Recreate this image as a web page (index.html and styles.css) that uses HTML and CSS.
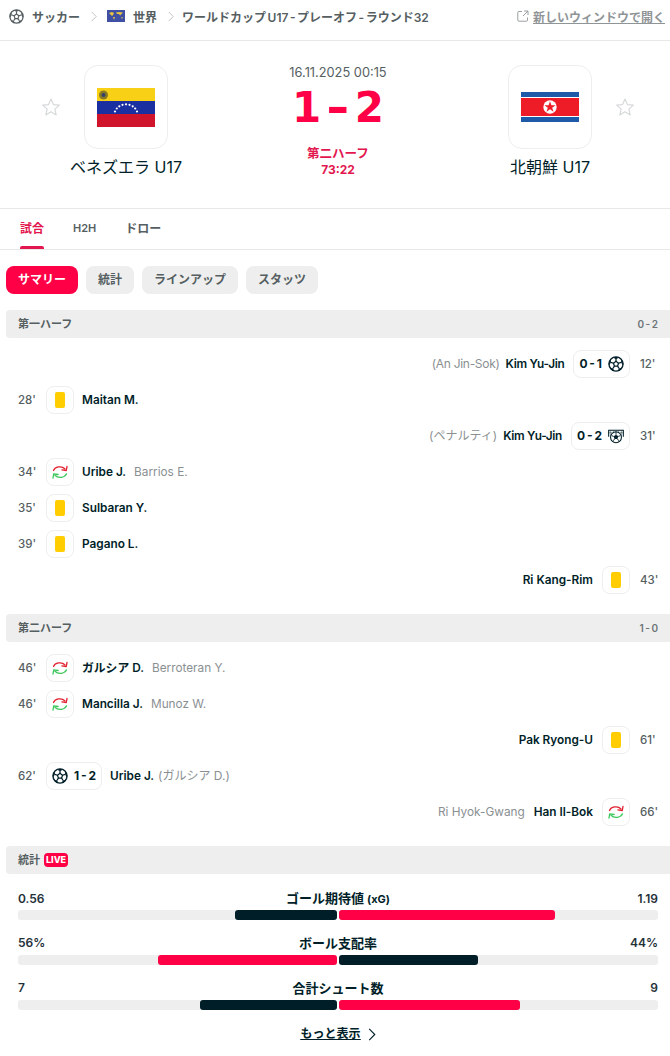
FILE: index.html
```html
<!DOCTYPE html>
<html lang="ja">
<head>
  <meta charset="UTF-8" />
  <meta name="viewport" content="width=device-width, initial-scale=1.0">
  <title>ベネズエラ U17 - 北朝鮮 U17</title>
  <link rel="stylesheet" href="styles.css">
</head>
<body>

  <!-- Shared icons -->
  <svg class="defs" width="0" height="0">
    <symbol id="ball" viewBox="0 0 24 24">
      <circle cx="12" cy="12" r="10.6" fill="none" stroke="currentColor" stroke-width="2"/>
      <path d="M12 8l3.800 2.800-1.500 4.500H9.700l-1.500-4.500z" fill="none" stroke="currentColor" stroke-width="1.800" stroke-linejoin="round"/>
      <path d="M12 8V4.500M15.800 10.800l3.700-1.300M14.300 15.300l2.300 3.200M9.700 15.300l-2.300 3.200M8.200 10.800L4.500 9.500" fill="none" stroke="currentColor" stroke-width="1.800"/>
      <path d="M8 2.500L12 4.800l4-2.300L12 1zM19.500 9.500l.6-4.500 2.900 6.500-1 2.500zM16.600 18.500l4.700-.5-4.300 4.600-2.400-.3zM7.400 18.500l-4.700-.5L7 22.600l2.400-.3zM4.500 9.500L3.900 5 1 11.500l1 2.500z" fill="currentColor"/>
    </symbol>
    <symbol id="penalty" viewBox="0 0 24 24">
      <path d="M1 13V3.500h22V13" fill="none" stroke="currentColor" stroke-width="1.600"/>
      <path d="M4 3.500v8M8 3.500v3M12 3.500v3M16 3.500v3M20 3.500v8M1 7h5M18 7h5" stroke="currentColor" stroke-width=".6"/>
      <circle cx="12" cy="14" r="8.200" fill="#fff" stroke="currentColor" stroke-width="1.600"/>
      <path d="M12 10l3.500 2.500-1.300 4h-4.400l-1.300-4z" fill="currentColor"/>
      <path d="M12 10V6.500M15.500 12.500l3.200-1M14.200 16.500l2 2.700M9.800 16.500l-2 2.700M8.500 12.500l-3.200-1" stroke="currentColor" stroke-width="1.400"/>
    </symbol>
    <symbol id="star" viewBox="0 0 24 24">
      <path d="M12 2.500l2.900 6.600 7.100.7-5.400 4.700 1.600 7-6.200-3.700-6.200 3.700 1.600-7L2 9.800l7.100-.7z" fill="none" stroke="currentColor" stroke-width="1.400" stroke-linejoin="round"/>
    </symbol>
    <symbol id="sub" viewBox="0 0 16 16">
      <path d="M1.500 6.500C3 2.800 9.500 1.200 13 5" fill="none" stroke="#e3202f" stroke-width="1.300" stroke-linecap="round"/>
      <path d="M15 2.300L14.300 6.500l-4.400-.7" fill="none" stroke="#e3202f" stroke-width="1.300" stroke-linecap="round" stroke-linejoin="round"/>
      <path d="M14.500 9.800C13 13.400 6.500 15 3 11.200" fill="none" stroke="#3cc75a" stroke-width="1.300" stroke-linecap="round"/>
      <path d="M1 14l.7-4.200 4.400.7" fill="none" stroke="#3cc75a" stroke-width="1.300" stroke-linecap="round" stroke-linejoin="round"/>
    </symbol>
    <symbol id="chevron" viewBox="0 0 8 14">
      <path d="M1 1l6 6-6 6" fill="none" stroke="currentColor" stroke-width="1.200"/>
    </symbol>
  </svg>

  <!-- Breadcrumb -->
  <div class="crumbs">
    <svg class="crumb-ball"><use href="#ball"/></svg>
    <span>サッカー</span>
    <svg class="crumb-sep"><use href="#chevron"/></svg>
    <svg class="crumb-flag" viewBox="0 0 18 12">
      <rect width="18" height="12" fill="#3f4fa3"/>
      <path d="M2 3l3-1 2 1-1 2-1 1-2-2zM6 7l2 0-1 3zM9 2.500l3-.5 4 .5-2 2-1 1-1-1.500-2 0zM14 7l2 .5-1 1.500z" fill="#e9c53f"/>
    </svg>
    <span>世界</span>
    <svg class="crumb-sep"><use href="#chevron"/></svg>
    <span class="crumb-last">ワールドカップ U17 - プレーオフ - ラウンド32</span>
    <a class="new-window" href="#">
      <svg class="ext-icon" viewBox="0 0 12 12">
        <path d="M5 1.500H1.800a1 1 0 0 0-1 1v7.700a1 1 0 0 0 1 1h7.700a1 1 0 0 0 1-1V7.500M7 1h4v4M11 1L6 6" fill="none" stroke="currentColor" stroke-width=".9"/>
      </svg>
      <span class="new-window-text">新しいウィンドウで開く</span>
    </a>
  </div>

  <!-- Match header -->
  <div class="match-head">
    <div class="team">
      <svg class="star star-left"><use href="#star"/></svg>
      <div class="logo">
        <svg class="flag-ve" viewBox="0 0 58 39">
          <rect width="58" height="13" fill="#f8d117"/>
          <rect y="13" width="58" height="13" fill="#1a2fa0"/>
          <rect y="26" width="58" height="13" fill="#cf142b"/>
          <circle cx="6.500" cy="7" r="4.500" fill="#8a7a22"/>
          <circle cx="6.500" cy="7" r="2" fill="#33406e"/>
          <g fill="#fff">
            <circle cx="18" cy="23.500" r="1.100"/><circle cx="19.800" cy="20.500" r="1.100"/><circle cx="22.300" cy="18.300" r="1.100"/>
            <circle cx="25.500" cy="16.800" r="1.100"/><circle cx="29" cy="16.300" r="1.100"/><circle cx="32.500" cy="16.800" r="1.100"/>
            <circle cx="35.700" cy="18.300" r="1.100"/><circle cx="38.200" cy="20.500" r="1.100"/><circle cx="40" cy="23.500" r="1.100"/>
          </g>
        </svg>
      </div>
      <div class="team-name">ベネズエラ U17</div>
    </div>

    <div class="score-col">
      <div class="kickoff">16.11.2025 00:15</div>
      <div class="score">1<span class="score-dash">-</span>2</div>
      <div class="period">第二ハーフ</div>
      <div class="clock">73:22</div>
    </div>

    <div class="team">
      <div class="spacer"></div>
      <div class="logo">
        <svg class="flag-kp" viewBox="0 0 58 30">
          <rect width="58" height="30" fill="#1f5aa8"/>
          <rect y="5" width="58" height="20" fill="#fff"/>
          <rect y="6" width="58" height="18" fill="#ed1c27"/>
          <circle cx="29" cy="15" r="6.700" fill="#fff"/>
          <path d="M29 9.300l1.400 4h4.200l-3.400 2.500 1.300 4-3.500-2.500-3.500 2.500 1.300-4-3.400-2.500h4.200z" fill="#ed1c27"/>
        </svg>
      </div>
      <svg class="star star-right"><use href="#star"/></svg>
      <div class="team-name">北朝鮮 U17</div>
    </div>
  </div>

  <!-- Tabs -->
  <div class="tabs">
    <div class="tab active">試合</div>
    <div class="tab tab-latin">H2H</div>
    <div class="tab">ドロー</div>
  </div>

  <div class="pills">
    <div class="pill active">サマリー</div>
    <div class="pill">統計</div>
    <div class="pill">ラインアップ</div>
    <div class="pill">スタッツ</div>
  </div>

  <div class="content">

    <!-- First half -->
    <div class="section-bar"><span>第一ハーフ</span><span class="half-score">0 - 2</span></div>
    <div class="events">
      <div class="event away">
        <span class="assist tight">(An Jin-Sok)</span>
        <span class="player tight">Kim Yu-Jin</span>
        <div class="box goal"><b>0 - 1</b><svg class="ball"><use href="#ball"/></svg></div>
        <span class="minute">12'</span>
      </div>
      <div class="event">
        <span class="minute">28'</span>
        <div class="box"><i class="card"></i></div>
        <span class="player">Maitan M.</span>
      </div>
      <div class="event away">
        <span class="assist">(ペナルティ)</span>
        <span class="player tight">Kim Yu-Jin</span>
        <div class="box goal"><b>0 - 2</b><svg class="ball"><use href="#penalty"/></svg></div>
        <span class="minute">31'</span>
      </div>
      <div class="event">
        <span class="minute">34'</span>
        <div class="box"><svg class="sub"><use href="#sub"/></svg></div>
        <span class="player">Uribe J.</span>
        <span class="off">Barrios E.</span>
      </div>
      <div class="event">
        <span class="minute">35'</span>
        <div class="box"><i class="card"></i></div>
        <span class="player">Sulbaran Y.</span>
      </div>
      <div class="event">
        <span class="minute">39'</span>
        <div class="box"><i class="card"></i></div>
        <span class="player">Pagano L.</span>
      </div>
      <div class="event away">
        <span class="player">Ri Kang-Rim</span>
        <div class="box"><i class="card"></i></div>
        <span class="minute">43'</span>
      </div>
    </div>

    <!-- Second half -->
    <div class="section-bar"><span>第二ハーフ</span><span class="half-score">1 - 0</span></div>
    <div class="events">
      <div class="event">
        <span class="minute">46'</span>
        <div class="box"><svg class="sub"><use href="#sub"/></svg></div>
        <span class="player">ガルシア D.</span>
        <span class="off">Berroteran Y.</span>
      </div>
      <div class="event">
        <span class="minute">46'</span>
        <div class="box"><svg class="sub"><use href="#sub"/></svg></div>
        <span class="player">Mancilla J.</span>
        <span class="off">Munoz W.</span>
      </div>
      <div class="event away">
        <span class="player">Pak Ryong-U</span>
        <div class="box"><i class="card"></i></div>
        <span class="minute">61'</span>
      </div>
      <div class="event">
        <span class="minute">62'</span>
        <div class="box goal"><svg class="ball"><use href="#ball"/></svg><b>1 - 2</b></div>
        <span class="player">Uribe J.</span>
        <span class="assist">(ガルシア D.)</span>
      </div>
      <div class="event away">
        <span class="off">Ri Hyok-Gwang</span>
        <span class="player">Han Il-Bok</span>
        <div class="box"><svg class="sub"><use href="#sub"/></svg></div>
        <span class="minute">66'</span>
      </div>
    </div>

    <!-- Stats -->
    <div class="section-bar"><span class="stats-title">統計 <em class="live">LIVE</em></span></div>
    <div class="stats">
      <div class="stat">
        <div class="stat-head"><span>0.56</span><strong>ゴール期待値 <small>(xG)</small></strong><span class="val-right">1.19</span></div>
        <div class="bars">
          <div class="bar home"><div class="fill dark" style="width:32%"></div></div>
          <div class="bar"><div class="fill red" style="width:67.7%"></div></div>
        </div>
      </div>
      <div class="stat">
        <div class="stat-head"><span>56%</span><strong>ボール支配率</strong><span class="val-right">44%</span></div>
        <div class="bars">
          <div class="bar home"><div class="fill red" style="width:56%"></div></div>
          <div class="bar"><div class="fill dark" style="width:43.600%"></div></div>
        </div>
      </div>
      <div class="stat">
        <div class="stat-head"><span>7</span><strong>合計シュート数</strong><span class="val-right">9</span></div>
        <div class="bars">
          <div class="bar home"><div class="fill dark" style="width:43%"></div></div>
          <div class="bar"><div class="fill red" style="width:56.700%"></div></div>
        </div>
      </div>
      <a class="more" href="#"><span>もっと表示</span><svg class="more-arrow"><use href="#chevron"/></svg></a>
    </div>

  </div>
</body>
</html>
```

FILE: styles.css
```css
html, body {
  margin: 0;
  height: 100%;
  overflow: hidden;
  background: #fff;
  font-family: Inter, "Noto Sans CJK JP", sans-serif;
  color: #001e28;
}

a {
  color: inherit;
}

.defs {
  display: block;
  height: 0;
}

/* BREADCRUMB */
.crumbs {
  height: 32px;
  border-bottom: 1px solid #e8e8e8;
  padding: 0 5px 8px 9px;
  display: flex;
  align-items: center;
  font-size: 12px;
  font-weight: 600;
  color: #555e61;
}

.crumb-ball {
  width: 15px;
  height: 15px;
  margin-right: 8px;
}

.crumb-sep {
  width: 6px;
  height: 11px;
  margin: 0 10px 0 11px;
  color: #b9bdbf;
}

.crumb-flag {
  width: 18px;
  height: 12px;
  margin-right: 8px;
}

.crumb-last {
  word-spacing: -1.500px;
  margin-left: -2px;
}

.new-window {
  margin-left: auto;
  display: flex;
  align-items: center;
  gap: 4px;
  color: #8f9496;
}

.ext-icon {
  width: 12px;
  height: 12px;
}

.new-window-text {
  text-decoration: underline;
}

/* MATCH HEADER */
.match-head {
  display: grid;
  grid-template-columns: 240px 1fr 240px;
  padding: 24px 0 30px 6px;
  border-bottom: 1px solid #e8e8e8;
}

.team {
  display: grid;
  grid-template-columns: 1fr 84px 1fr;
  align-items: center;
  align-content: start;
}

.logo {
  width: 82px;
  height: 82px;
  border: 1px solid #eee;
  border-radius: 14px;
  display: flex;
  align-items: center;
  justify-content: center;
}

.flag-ve {
  width: 58px;
  height: 39px;
}

.flag-kp {
  width: 58px;
  height: 30px;
}

.star {
  width: 20px;
  height: 20px;
  color: #d5d8d9;
}

.star-left {
  justify-self: end;
  margin-right: 23px;
}

.star-right {
  margin-left: 23px;
}

.team-name {
  grid-column: 1 / 4;
  margin-top: 8px;
  text-align: center;
  font-size: 16px;
  line-height: 20px;
}

.score-col {
  text-align: center;
}

.kickoff {
  font-size: 12.800px;
  line-height: 16px;
  color: #555e61;
}

.score {
  margin-top: 3px;
  font-family: "DejaVu Sans", sans-serif;
  font-size: 42px;
  line-height: 48px;
  font-weight: 700;
  color: #ff0046;
}

.score-dash {
  display: inline-block;
  margin: 0 8px;
  transform: scaleX(1.350);
}

.period {
  margin-top: 14px;
  font-size: 12.500px;
  line-height: 16px;
  font-weight: 700;
  color: #e3174f;
}

.clock {
  font-size: 12px;
  line-height: 16px;
  font-weight: 700;
  color: #e3174f;
}

/* TABS */
.tabs {
  height: 40px;
  padding-left: 20px;
  display: flex;
  gap: 29px;
  border-bottom: 1px solid #e8e8e8;
}

.tab {
  display: flex;
  flex-direction: column;
  font-size: 12px;
  font-weight: 600;
  line-height: 39px;
  color: #555e61;
}

.tab-latin {
  font-size: 11px;
}

.tab.active {
  color: #e3174f;
}

.tab.active::after {
  content: "";
  margin-top: -2px;
  height: 3px;
  border-radius: 2px 2px 0 0;
  background: #e3174f;
}

.pills {
  display: flex;
  gap: 8px;
  padding: 16px 0 16px 6px;
}

.pill {
  height: 28px;
  padding: 0 12px;
  border-radius: 8px;
  background: #eee;
  font-size: 12px;
  font-weight: 700;
  line-height: 28px;
  color: #555e61;
}

.pill.active {
  background: #ff0046;
  color: #fff;
}

/* SUMMARY */
.content {
  padding-left: 6px;
}

.section-bar {
  height: 28px;
  padding: 0 12px;
  border-radius: 4px 0 0 4px;
  background: #eee;
  display: flex;
  align-items: center;
  justify-content: space-between;
  font-size: 11px;
  font-weight: 600;
  line-height: 14px;
  color: #555e61;
}

.half-score {
  font-size: 10px;
  word-spacing: -1px;
  color: #6d7578;
}

.stats-title {
  display: flex;
  align-items: center;
  gap: 4px;
}

.live {
  padding: 0 2px;
  height: 14px;
  border-radius: 4px;
  background: #ff0046;
  color: #fff;
  font-size: 9px;
  font-style: normal;
  font-weight: 800;
  line-height: 14px;
}

.events {
  padding: 8px 12px 16px 12px;
}

.event {
  height: 36px;
  display: flex;
  align-items: center;
  font-size: 11.800px;
  line-height: 16px;
}

.event.away {
  justify-content: flex-end;
}

.minute {
  width: 28px;
  font-size: 11.500px;
  font-weight: 500;
  color: #555e61;
}

.away .minute {
  width: 18px;
  margin-left: 10px;
}

.box {
  height: 26px;
  min-width: 26px;
  border: 1px solid #eee;
  border-radius: 8px;
  display: flex;
  align-items: center;
  justify-content: center;
}

.goal {
  padding: 0 5px;
  gap: 6px;
  font-size: 12px;
  word-spacing: -1px;
}

.ball {
  width: 16px;
  height: 16px;
}

.card {
  width: 10px;
  height: 16px;
  border-radius: 2px;
  background: #ffcd00;
}

.sub {
  width: 16px;
  height: 16px;
}

.player {
  margin-left: 8px;
  font-weight: 600;
}

.away .player {
  margin: 0 9px 0 0;
}

.off {
  margin-left: 8px;
  font-size: 11.800px;
  color: #8a8f92;
}

.away .off {
  margin: 0 9px 0 0;
}

.assist {
  margin-left: 4px;
  font-size: 12px;
  color: #8a8f92;
}

.away .assist {
  margin: 0 6px 0 0;
}

.tight {
  letter-spacing: -0.300px;
}

/* STATS */
.stats {
  padding: 16px 12px 0 12px;
  display: flex;
  flex-direction: column;
  gap: 15px;
}

.stat-head {
  display: grid;
  grid-template-columns: 1fr auto 1fr;
  align-items: center;
  height: 16px;
  font-size: 12px;
  font-weight: 600;
  line-height: 16px;
  color: #1f3139;
}

.val-right {
  text-align: right;
}

.stat-head strong {
  font-size: 13px;
  font-weight: 700;
  color: #001e28;
}

.stat-head small {
  font-size: 11px;
}

.bars {
  margin-top: 4px;
  display: flex;
  gap: 2px;
}

.bar {
  flex: 1;
  height: 10px;
  border-radius: 3px;
  background: #eee;
  display: flex;
}

.bar.home {
  justify-content: flex-end;
}

.fill {
  border-radius: 3px;
}

.fill.dark {
  background: #001e28;
}

.fill.red {
  background: #ff0046;
}

.more {
  margin-top: 1px;
  align-self: center;
  display: flex;
  align-items: center;
  gap: 7px;
  font-size: 12px;
  font-weight: 700;
  line-height: 16px;
}

.more span {
  text-decoration: underline;
}

.more-arrow {
  width: 8px;
  height: 13px;
}
```
